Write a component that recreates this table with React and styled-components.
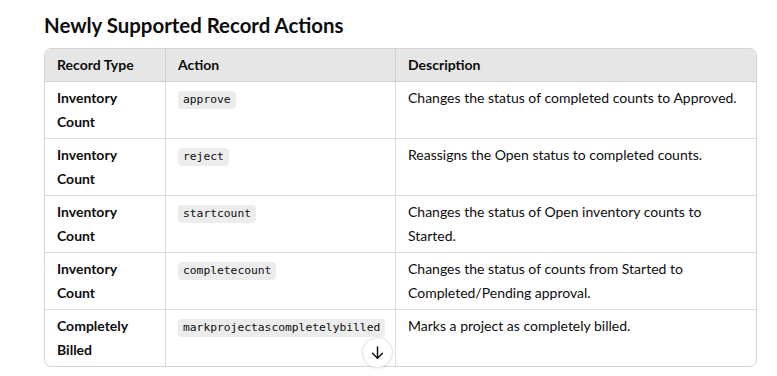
import React from 'react'
import styled, {createGlobalStyle} from 'styled-components'

const rows = [
    {type: ['Inventory', 'Count'], action: 'approve', desc: 'Changes the status of completed counts to Approved.'},
    {type: ['Inventory', 'Count'], action: 'reject', desc: 'Reassigns the Open status to completed counts.'},
    {type: ['Inventory', 'Count'], action: 'startcount', desc: 'Changes the status of Open inventory counts to Started.'},
    {type: ['Inventory', 'Count'], action: 'completecount', desc: 'Changes the status of counts from Started to Completed/Pending approval.'},
    {type: ['Completely', 'Billed'], action: 'markprojectascompletelybilled', desc: 'Marks a project as completely billed.'},
]

function App() {
    return (
        <Page>
            <GlobalStyle />
            <Title>Newly Supported Record Actions</Title>
            <TableWrap>
                <Table>
                    <colgroup>
                        <col style={{width: 121}} />
                        <col style={{width: 230}} />
                        <col />
                    </colgroup>
                    <thead>
                        <tr>
                            <Th>Record Type</Th>
                            <Th>Action</Th>
                            <Th last>Description</Th>
                        </tr>
                    </thead>
                    <tbody>
                        {rows.map((r, i) => (
                            <tr key={i}>
                                <TypeCell lastRow={i === rows.length - 1}>
                                    {r.type[0]}<br />{r.type[1]}
                                </TypeCell>
                                <Td lastRow={i === rows.length - 1}>
                                    <Code>{r.action}</Code>
                                </Td>
                                <Td last lastRow={i === rows.length - 1}>{r.desc}</Td>
                            </tr>
                        ))}
                    </tbody>
                </Table>
            </TableWrap>
            <ScrollButton aria-label="Scroll down">
                <svg width="17" height="17" viewBox="0 0 24 24" fill="none" stroke="#0d0d0d" strokeWidth="2" strokeLinecap="round" strokeLinejoin="round">
                    <path d="M12 4v16" />
                    <path d="M5 13l7 7 7-7" />
                </svg>
            </ScrollButton>
        </Page>
    )
}

export default App

const GlobalStyle = createGlobalStyle`
    body {
        margin: 0;
        background: #fff;
        font-family: Lato, "Noto Sans", sans-serif;
        color: #0d0d0d;
    }
`

const Page = styled.div`
    position: relative;
    width: 777px;
    height: 376px;
    padding: 11px 22px 0 44px;
    box-sizing: border-box;
    overflow: hidden;
`

const Title = styled.h3`
    margin: 0 0 9px;
    font-size: 20.4px;
    line-height: 28px;
    font-weight: 700;
`

const TableWrap = styled.div`
    width: 711px;
    border: 1px solid #d4d4d4;
    border-radius: 7px;
    overflow: hidden;
`

const Table = styled.table`
    width: 100%;
    border-collapse: separate;
    border-spacing: 0;
    table-layout: fixed;
    font-size: 14px;
    line-height: 24px;
`

const Th = styled.th`
    background: #e6e6e6;
    text-align: left;
    font-weight: 700;
    padding: 4px 12px;
    border-bottom: 1px solid #d0d0d0;
    border-right: ${p => p.last ? 'none' : '1px solid #d0d0d0'};
`

const Td = styled.td`
    vertical-align: top;
    padding: 4px 12px;
    height: 48px;
    border-bottom: ${p => p.lastRow ? 'none' : '1px solid #dcdcdc'};
    border-right: ${p => p.last ? 'none' : '1px solid #dcdcdc'};
`

const TypeCell = styled(Td)`
    font-weight: 700;
`

const Code = styled.code`
    display: inline-block;
    margin-top: 5px;
    padding: 0 5px;
    background: #ececec;
    border-radius: 4px;
    font-family: "DejaVu Sans Mono", monospace;
    font-size: 11.3px;
    line-height: 18px;
    vertical-align: top;
`

const ScrollButton = styled.button`
    position: absolute;
    left: 362px;
    top: 337px;
    width: 31px;
    height: 31px;
    border-radius: 50%;
    border: 1px solid #e3e3e3;
    background: #fff;
    display: flex;
    align-items: center;
    justify-content: center;
    padding: 0;
    box-shadow: 0 1px 3px rgba(0,0,0,0.06);
`
